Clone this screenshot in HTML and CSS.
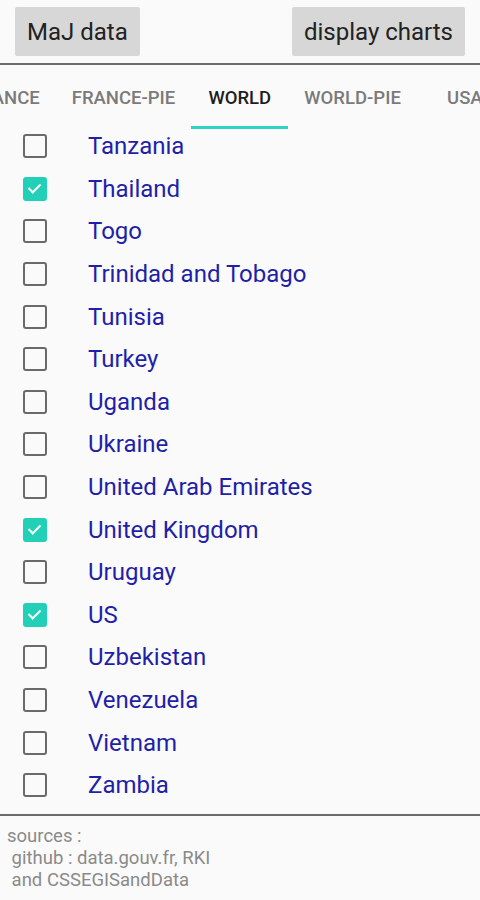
FILE: index.html
```html
<!DOCTYPE html>
<html lang="en">
<head>
    <meta charset="UTF-8">
    <meta name="viewport" content="width=device-width, initial-scale=1.0">
    <title>Covid charts</title>
    <link rel="stylesheet" href="styles.css">
</head>
<body>
    <div class="toolbar">
        <button class="btn">MaJ data</button>
        <button class="btn">display charts</button>
    </div>

    <div class="tabs">
        <div class="tab-strip">
            <div class="tab">France</div>
            <div class="tab">France-pie</div>
            <div class="tab active">World</div>
            <div class="tab">World-pie</div>
            <div class="tab">USA</div>
        </div>
    </div>

    <ul class="country-list">
        <li class="row"><span class="box"></span><span class="name">Tanzania</span></li>
        <li class="row"><span class="box checked"></span><span class="name">Thailand</span></li>
        <li class="row"><span class="box"></span><span class="name">Togo</span></li>
        <li class="row"><span class="box"></span><span class="name">Trinidad and Tobago</span></li>
        <li class="row"><span class="box"></span><span class="name">Tunisia</span></li>
        <li class="row"><span class="box"></span><span class="name">Turkey</span></li>
        <li class="row"><span class="box"></span><span class="name">Uganda</span></li>
        <li class="row"><span class="box"></span><span class="name">Ukraine</span></li>
        <li class="row"><span class="box"></span><span class="name">United Arab Emirates</span></li>
        <li class="row"><span class="box checked"></span><span class="name">United Kingdom</span></li>
        <li class="row"><span class="box"></span><span class="name">Uruguay</span></li>
        <li class="row"><span class="box checked"></span><span class="name">US</span></li>
        <li class="row"><span class="box"></span><span class="name">Uzbekistan</span></li>
        <li class="row"><span class="box"></span><span class="name">Venezuela</span></li>
        <li class="row"><span class="box"></span><span class="name">Vietnam</span></li>
        <li class="row"><span class="box"></span><span class="name">Zambia</span></li>
    </ul>

    <div class="sources">sources :
 github : data.gouv.fr, RKI
 and CSSEGISandData</div>
</body>
</html>
```

FILE: styles.css
```css
body {
    margin: 0;
    background-color: #fafafa;
    font-family: Roboto, 'Liberation Sans', sans-serif;
    width: 480px;
    height: 900px;
    overflow: hidden;
}

.toolbar {
    display: flex;
    justify-content: space-between;
    padding: 7px 15px 0;
    height: 56px;
    border-bottom: 2px solid #6b6b6b;
}

.btn {
    height: 49px;
    padding: 0 12px;
    border: none;
    border-radius: 2px;
    background-color: #d7d7d7;
    color: #222;
    font-family: Roboto, 'Liberation Sans', sans-serif;
    font-size: 24px;
}

/* tab bar is scrolled a little to the right, so the first tab is cut */
.tabs {
    height: 64px;
    margin-bottom: -4px;
    overflow: hidden;
}

.tab-strip {
    display: flex;
    height: 100%;
    margin-left: -46px;
}

.tab {
    flex: none;
    min-width: 64px;
    padding: 2px 16px 0;
    display: flex;
    align-items: center;
    justify-content: center;
    font-size: 18.5px;
    font-weight: 500;
    text-transform: uppercase;
    color: #7a7a7a;
}

.tab.active {
    min-width: 65px;
    color: #1e1e1e;
    box-shadow: inset 0 -3px 0 #2ed4c0;
}

.country-list {
    list-style: none;
    margin: 0;
    padding: 0 0 7px;
    border-bottom: 2px solid #6b6b6b;
}

.row {
    display: flex;
    align-items: center;
    height: 42.6px;
}

.box {
    width: 20px;
    height: 20px;
    margin-left: 23px;
    border: 2px solid #6a6a6a;
    border-radius: 3px;
    position: relative;
}

.box.checked {
    background-color: #22d0b8;
    border-color: #22d0b8;
}

.box.checked::after {
    content: '';
    position: absolute;
    left: 6px;
    top: 2px;
    width: 5px;
    height: 10px;
    border: solid #fff;
    border-width: 0 2px 2px 0;
    transform: rotate(45deg);
}

.name {
    margin-left: 41px;
    font-size: 24px;
    color: #1f1fa8;
}

.sources {
    white-space: pre;
    padding: 9px 7px 0;
    font-size: 18.5px;
    line-height: 22px;
    color: #8a8a8a;
}
```
